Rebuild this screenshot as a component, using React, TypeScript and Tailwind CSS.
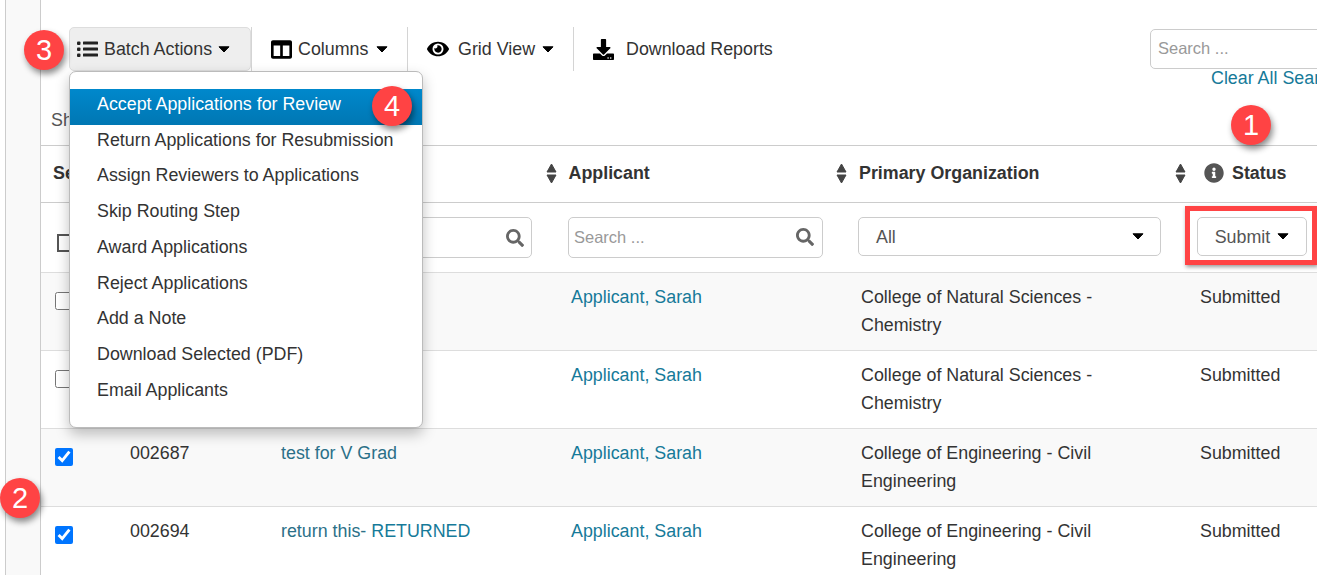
import { FaColumns, FaDownload, FaEye, FaInfoCircle, FaSearch } from "react-icons/fa";

const menuItems = [
  "Return Applications for Resubmission",
  "Assign Reviewers to Applications",
  "Skip Routing Step",
  "Award Applications",
  "Reject Applications",
  "Add a Note",
  "Download Selected (PDF)",
  "Email Applicants",
];

const rows = [
  { id: "", title: "", extra: "", org: "College of Natural Sciences -", org2: "Chemistry", checked: false },
  { id: "", title: "", extra: "", org: "College of Natural Sciences -", org2: "Chemistry", checked: false },
  { id: "002687", title: "test for V Grad", extra: "", org: "College of Engineering - Civil", org2: "Engineering", checked: true },
  { id: "002694", title: "return this-", extra: " RETURNED", org: "College of Engineering - Civil", org2: "Engineering", checked: true },
];

const gridCols = "grid grid-cols-[77px_151px_290px_290px_339px_129px]";

const Badge = ({ n, className }: { n: number; className: string }) => (
  <div
    className={
      "absolute z-30 flex h-10 w-10 items-center justify-center rounded-full bg-[#ff4344] text-[29px] leading-none text-white shadow-[2px_4px_6px_rgba(0,0,0,0.45)] " +
      className
    }
  >
    {n}
  </div>
);

const Divider = () => <div className="h-11 w-px bg-[#d4d4d4]" />;

const Caret = ({ className }: { className: string }) => (
  <svg width="12" height="7" viewBox="0 0 12 7" className={className}>
    <path d="M1 .8h10L6 6z" fill="#000" stroke="#000" strokeWidth="1" strokeLinejoin="round" />
  </svg>
);

const SortIcon = ({ className }: { className: string }) => (
  <svg width="11" height="21" viewBox="0 0 11 21" className={"shrink-0 " + className}>
    <path d="M1 9 5.5 1 10 9z" fill="#444" stroke="#444" strokeLinejoin="round" />
    <path d="M1 12 5.5 20 10 12z" fill="#444" stroke="#444" strokeLinejoin="round" />
  </svg>
);

const ListIcon = () => (
  <svg width="21" height="16" viewBox="0 0 21 16" fill="#222" className="shrink-0">
    <rect x="0" y="0.5" width="3.5" height="3.5" rx="1" />
    <rect x="6" y="0.5" width="15" height="3" rx="0.6" />
    <rect x="0" y="6.5" width="3.5" height="3.5" rx="1" />
    <rect x="6" y="6.5" width="15" height="3" rx="0.6" />
    <rect x="0" y="12.5" width="3.5" height="3.5" rx="1" />
    <rect x="6" y="12.5" width="15" height="3" rx="0.6" />
  </svg>
);

export default function App() {
  return (
    <div className="relative flex h-[575px] w-[1317px] overflow-hidden bg-white font-['Liberation_Sans',Arial,sans-serif] text-[17.85px] leading-7 text-[#333]">
      {/* left gutter */}
      <div className="ml-[5px] h-full w-[36px] shrink-0 border-x border-[#ccc] bg-[#f9f9f9]" />

      <div className="w-[1276px] shrink-0">
        {/* toolbar */}
        <div className="flex h-[104px] items-start pt-[27px]">
          <div className="w-[1109px] shrink-0">
            <div className="flex h-11 items-center pl-[28px]">
              <div className="flex h-11 w-[182px] items-center rounded-[5px] border border-[#ddd] bg-[#eee] pl-[7px]">
                <ListIcon />
                <span className="ml-[6px]">Batch Actions</span>
                <Caret className="ml-[6px]" />
              </div>
              <Divider />
              <div className="flex w-[155px] items-center pl-[19px]">
                <FaColumns className="text-[21px] text-black" />
                <span className="ml-[6px]">Columns</span>
                <Caret className="ml-[8px]" />
              </div>
              <Divider />
              <div className="flex w-[165px] items-center pl-[19px]">
                <FaEye className="text-[22px] text-black" />
                <span className="ml-[9px]">Grid View</span>
                <Caret className="ml-[7px]" />
              </div>
              <Divider />
              <div className="flex items-center pl-[19px]">
                <FaDownload className="text-[21px] text-black" />
                <span className="ml-[12px]">Download Reports</span>
              </div>
            </div>
          </div>
          <div className="mt-[2px] w-[240px] shrink-0">
            <div className="h-10 rounded-[5px] border border-[#ccc] pl-[7px] text-[16.5px] leading-[36px] text-[#999]">
              Search ...
            </div>
            <div className="-mt-[5px] ml-[61px] whitespace-nowrap text-[#167a99]">Clear All Searches</div>
          </div>
        </div>
        <div className="h-[41px] pl-[10px] pt-[2px] text-[#555]">Showing</div>

        {/* header row */}
        <div className={gridCols + " h-[58px] items-center border-y border-[#ccc] pb-[2px] font-bold"}>
          <div className="pl-3">Select</div>
          <div />
          <div />
          <div className="flex items-center">
            <SortIcon className="-ml-[13px] mr-[11.5px]" />
            Applicant
          </div>
          <div className="flex items-center">
            <SortIcon className="-ml-[13px] mr-[12px]" />
            Primary Organization
          </div>
          <div className="flex items-center whitespace-nowrap">
            <SortIcon className="-ml-[13px]" />
            <FaInfoCircle className="ml-[18px] mr-[8px] text-[20px] text-[#555]" />
            Status
          </div>
        </div>

        {/* filter row */}
        <div className={gridCols + " h-[69px] items-start bg-white pt-[14px]"}>
          <div className="pl-4 pt-[17px]">
            <div className="h-[18px] w-[18px] border-2 border-[#555]" />
          </div>
          <div />
          <div className="flex justify-end pr-[27px]">
            <div className="flex h-[41px] w-[200px] items-center justify-end rounded-[5px] border border-[#ccc] pr-[7px] text-[#666]">
              <FaSearch className="text-[18px]" />
            </div>
          </div>
          <div className="pl-[9px]">
            <div className="flex h-[41px] w-[255px] items-center justify-between rounded-[5px] border border-[#ccc] pb-[2px] pl-[5px] pr-[8px] text-[16.5px] text-[#999]">
              Search ...
              <FaSearch className="text-[18px] text-[#666]" />
            </div>
          </div>
          <div className="pl-[9px]">
            <div className="flex h-[39px] w-[303px] items-center justify-between rounded-[5px] border border-[#ccc] pl-[17px] pr-[16px] text-[#555]">
              All
              <Caret className="" />
            </div>
          </div>
          <div className="pl-[9px]">
            <div className="flex h-[39px] w-[110px] items-center justify-center rounded-[5px] border border-[#ccc] text-[#555]">
              Submit
              <Caret className="ml-[7px]" />
            </div>
          </div>
        </div>

        {/* data rows */}
        {rows.map((r, i) => (
          <div
            key={i}
            className={gridCols + " h-[78px] border-t border-[#ddd] pt-[10px] " + (i % 2 === 0 ? "bg-[#f9f9f9]" : "bg-white")}
          >
            <div className="pl-[14px] pt-[9px]">
              <input type="checkbox" readOnly checked={r.checked} className="m-0 block h-[18px] w-[18px]" />
            </div>
            <div className="pl-3">{r.id}</div>
            <div className="pl-3 text-[#167a99]">
              <span className="text-[#2b7088]">{r.title}</span>
              {r.extra}
            </div>
            <div className="pl-3 text-[#167a99]">Applicant, Sarah</div>
            <div className="pl-3">
              {r.org}
              <br />
              {r.org2}
            </div>
            <div className="pl-3">Submitted</div>
          </div>
        ))}
      </div>

      {/* batch actions dropdown */}
      <div className="absolute left-[69px] top-[71px] z-20 h-[357px] w-[354px] rounded-[7px] border border-[#bbb] bg-white pt-[17px] shadow-[0_6px_14px_rgba(0,0,0,0.25)]">
        <div className="h-9 bg-gradient-to-b from-[#0088cc] to-[#0077b3] pl-[27px] leading-[30px] text-white">
          Accept Applications for Review
        </div>
        <div className="-mt-[0.4px]">
          {menuItems.map((m) => (
            <div key={m} className="h-[35.75px] pl-[27px] leading-[30px]">
              {m}
            </div>
          ))}
        </div>
      </div>

      {/* red highlight around status filter */}
      <div className="absolute left-[1185px] top-[206px] z-10 h-[59px] w-[132px] border-[5px] border-[#ff4344] shadow-[1px_2px_4px_rgba(0,0,0,0.4)]" />

      <Badge n={3} className="left-[24px] top-[30px]" />
      <Badge n={4} className="left-[372px] top-[86px]" />
      <Badge n={1} className="left-[1231px] top-[105px]" />
      <Badge n={2} className="left-0 top-[478px]" />
    </div>
  );
}
